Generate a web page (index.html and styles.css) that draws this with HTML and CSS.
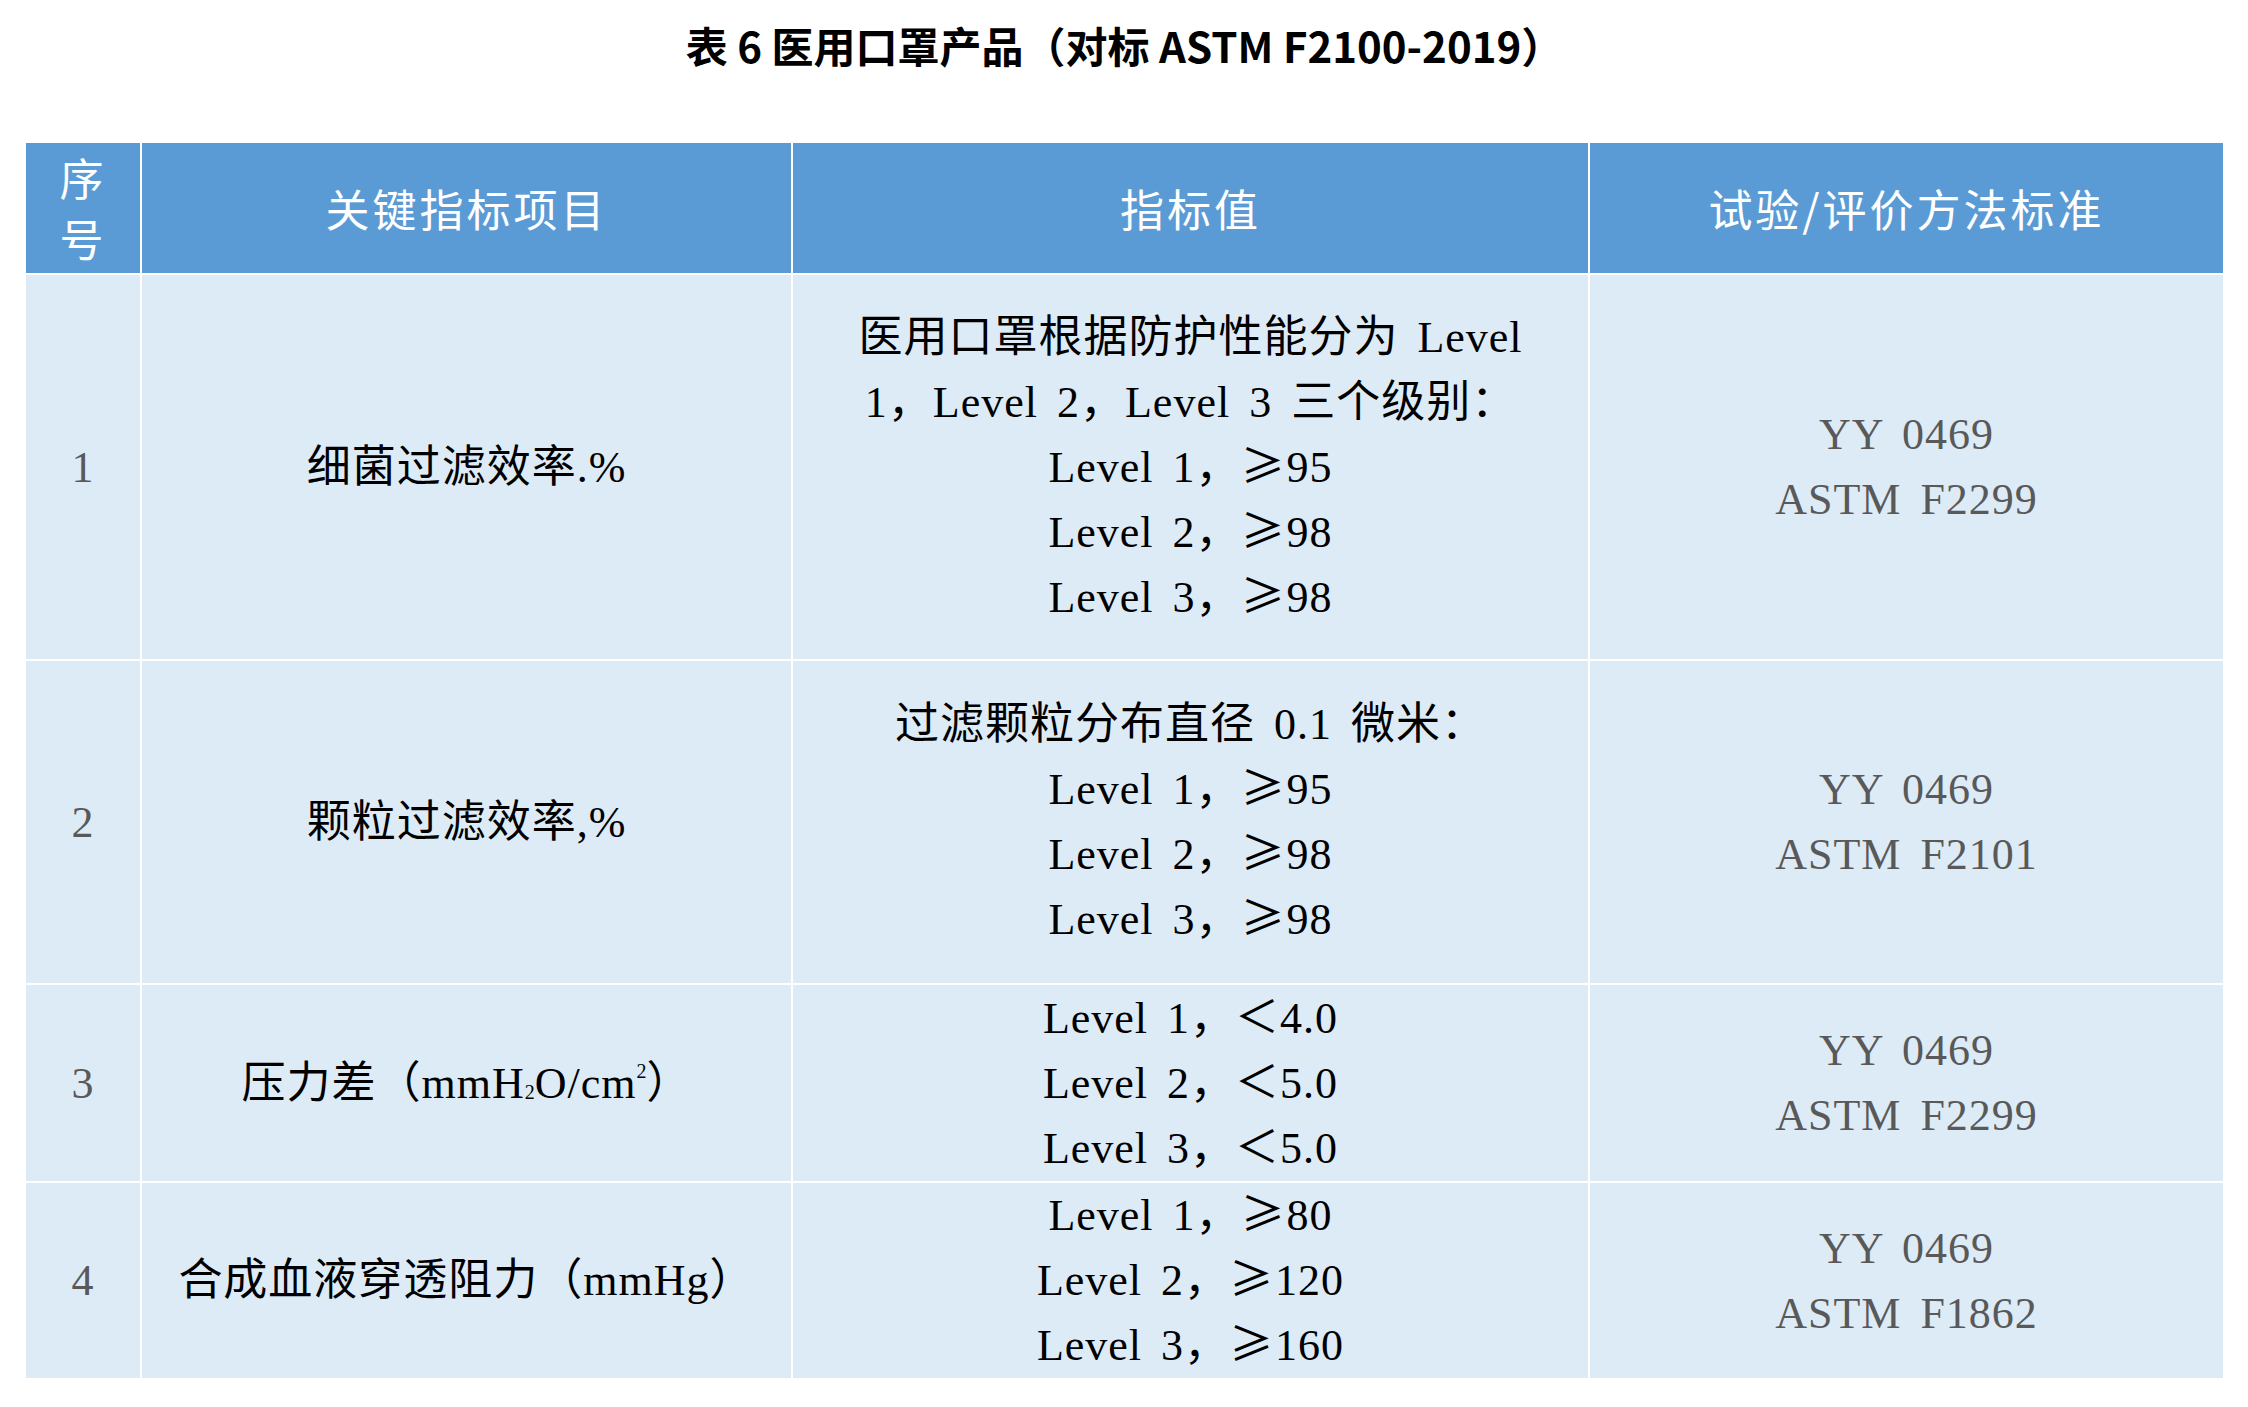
FILE: index.html
```html
<!DOCTYPE html>
<html lang="zh-CN">
<head>
<meta charset="utf-8">
<title>表 6 医用口罩产品</title>
<link rel="stylesheet" href="styles.css">
</head>
<body>
<div class="page">
  <h1 class="title">表 6 医用口罩产品（对标 ASTM F2100-2019）</h1>
  <table class="spec">
    <colgroup>
      <col class="c-no">
      <col class="c-item">
      <col class="c-val">
      <col class="c-std">
    </colgroup>
    <thead>
      <tr class="r-head">
        <th><span class="stack">序号</span></th>
        <th>关键指标项目</th>
        <th>指标值</th>
        <th>试验/评价方法标准</th>
      </tr>
    </thead>
    <tbody>
      <tr class="r1">
        <td class="no">1</td>
        <td class="item">细菌过滤效率.%</td>
        <td class="val">医用口罩根据防护性能分为 Level<br>1，Level 2，Level 3 三个级别：<br>Level 1，<span class="ge">≥</span>95<br>Level 2，<span class="ge">≥</span>98<br>Level 3，<span class="ge">≥</span>98</td>
        <td class="std">YY 0469<br>ASTM F2299</td>
      </tr>
      <tr class="r2">
        <td class="no">2</td>
        <td class="item">颗粒过滤效率,%</td>
        <td class="val">过滤颗粒分布直径 0.1 微米：<br>Level 1，<span class="ge">≥</span>95<br>Level 2，<span class="ge">≥</span>98<br>Level 3，<span class="ge">≥</span>98</td>
        <td class="std">YY 0469<br>ASTM F2101</td>
      </tr>
      <tr class="r3">
        <td class="no">3</td>
        <td class="item">压力差（mmH<sub class="lo">2</sub>O/cm<sup class="hi">2</sup>）</td>
        <td class="val">Level 1，＜4.0<br>Level 2，＜5.0<br>Level 3，＜5.0</td>
        <td class="std">YY 0469<br>ASTM F2299</td>
      </tr>
      <tr class="r4">
        <td class="no">4</td>
        <td class="item">合成血液穿透阻力（mmHg）</td>
        <td class="val">Level 1，<span class="ge">≥</span>80<br>Level 2，<span class="ge">≥</span>120<br>Level 3，<span class="ge">≥</span>160</td>
        <td class="std">YY 0469<br>ASTM F1862</td>
      </tr>
    </tbody>
  </table>
</div>
</body>
</html>
```

FILE: styles.css
```css
* {
  box-sizing: border-box;
}

html, body {
  margin: 0;
  padding: 0;
  background: #ffffff;
}

.page {
  padding: 0 25px 0 26px;
}

.title {
  margin: 0;
  height: 143px;
  padding-top: 24px;
  font-family: "Noto Sans CJK SC", sans-serif;
  font-weight: 700;
  font-size: 42px;
  line-height: 42px;
  text-align: center;
  color: #000000;
}

.spec {
  width: 2197px;
  table-layout: fixed;
  border-collapse: separate;
  border-spacing: 0;
}

.c-no { width: 114px; }
.c-item { width: 651px; }
.c-val { width: 797px; }
.c-std { width: 635px; }

.spec th,
.spec td {
  border-left: 2px solid #ffffff;
  border-top: 2px solid #ffffff;
  padding: 0 8px;
  text-align: center;
  vertical-align: middle;
}

.spec tr > :first-child {
  border-left: 0;
}

.spec thead th {
  border-top: 0;
  background: #5b9bd5;
  color: #ffffff;
  font-family: "Noto Sans CJK SC", sans-serif;
  font-weight: 400;
  font-size: 44px;
  line-height: 61px;
  letter-spacing: 3px;
}

.stack {
  display: inline-block;
  width: 1.1em;
}

.spec td {
  background: #ddebf7;
  font-family: "Liberation Serif", "Noto Sans CJK SC", serif;
  font-size: 44px;
  line-height: 65px;
  letter-spacing: 1px;
  word-spacing: 7px;
}

.no,
.std {
  color: #595959;
}

.item,
.val {
  color: #000000;
}

.ge {
  font-family: "Noto Sans CJK SC", sans-serif;
  line-height: 0;
  letter-spacing: 2px;
}

.lo {
  font-size: 20px;
  line-height: 0;
  vertical-align: -1px;
  letter-spacing: 0;
}

.hi {
  font-size: 20px;
  line-height: 0;
  vertical-align: 20px;
  letter-spacing: 0;
}

.r-head { height: 130px; }
.r1 { height: 386px; }
.r2 { height: 324px; }
.r3 { height: 198px; }
.r4 { height: 197px; }
```
